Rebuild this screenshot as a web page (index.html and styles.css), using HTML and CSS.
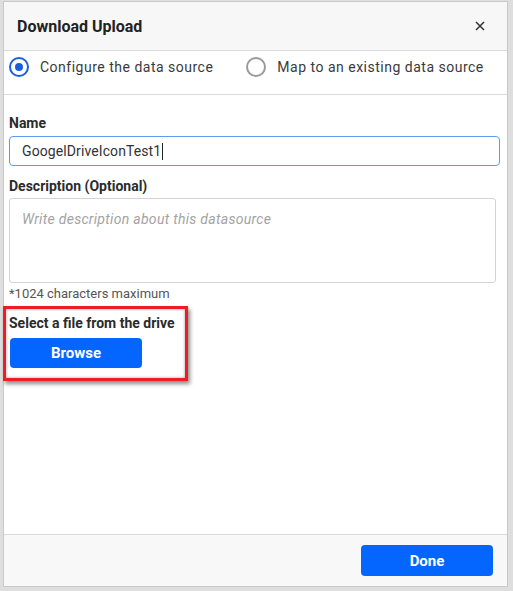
FILE: index.html
```html
<!DOCTYPE html>
<html>
<head>
<meta charset="utf-8">
<link rel="stylesheet" href="styles.css">
</head>
<body>
<div class="dialog">
  <div class="header">
    <span class="title">Download Upload</span>
    <svg class="close" width="10" height="10" viewBox="0 0 10 10"><path d="M1 1L9 9M9 1L1 9" stroke="#333" stroke-width="1.5" fill="none"/></svg>
  </div>
  <div class="radios">
    <label class="radio"><span class="circle checked"><span class="dot"></span></span><span class="rtext">Configure the data source</span></label>
    <label class="radio second"><span class="circle"></span><span class="rtext">Map to an existing data source</span></label>
  </div>
  <div class="content">
    <div class="label">Name</div>
    <div class="input"><span>GoogelDriveIconTest1</span><span class="caret"></span></div>
    <div class="label desc-label">Description (Optional)</div>
    <div class="textarea">Write description about this datasource</div>
    <div class="hint">*1024 characters maximum</div>
    <div class="highlight">
      <div class="label">Select a file from the drive</div>
      <button class="btn browse">Browse</button>
    </div>
  </div>
  <div class="footer">
    <button class="btn done">Done</button>
  </div>
</div>
</body>
</html>
```
FILE: styles.css
```css
html, body {
  margin: 0;
  padding: 0;
}
body {
  background: #dedede;
  font-family: Roboto, "Liberation Sans", Arial, sans-serif;
  color: #333;
  width: 513px;
  height: 591px;
  overflow: hidden;
}
.dialog {
  margin: 1px 0 0 3px;
  width: 503px;
  height: 584px;
  border: 1px solid #c9c9c9;
  background: #fff;
  display: flex;
  flex-direction: column;
}
.header {
  height: 48px;
  background: #f7f7f7;
  border-bottom: 1px solid #dadada;
  display: flex;
  align-items: center;
  justify-content: space-between;
  padding: 0 22px 0 13px;
}
.title {
  font-size: 16px;
  font-weight: 700;
  color: #222;
}
.radios {
  height: 44px;
  box-sizing: border-box;
  border-bottom: 1px solid #dadada;
  display: flex;
  align-items: flex-start;
  padding: 6px 0 0 5px;
}
.radio {
  display: flex;
  align-items: center;
}
.radio.second {
  margin-left: 33px;
}
.circle {
  width: 16px;
  height: 16px;
  border: 2px solid #9a9a9a;
  border-radius: 50%;
  display: flex;
  align-items: center;
  justify-content: center;
}
.circle.checked {
  border-color: #1a5ee0;
}
.dot {
  width: 8px;
  height: 8px;
  border-radius: 50%;
  background: #1a5ee0;
}
.rtext {
  margin-left: 11px;
  font-size: 14px;
  letter-spacing: 0.5px;
  color: #3a3a3a;
}
.content {
  flex: 1;
  padding: 20px 0 0 5px;
}
.label {
  font-size: 14px;
  font-weight: 700;
  line-height: 16px;
  color: #2b2b2b;
}
.input {
  margin-top: 5px;
  height: 28px;
  border: 1px solid #5a9cf2;
  border-radius: 4px;
  display: flex;
  align-items: center;
  padding-left: 12px;
  box-sizing: content-box;
  font-size: 14px;
  letter-spacing: 0.1px;
  color: #333;
  width: 477px;
}
.caret {
  display: inline-block;
  width: 1px;
  height: 17px;
  background: #222;
  margin-left: 1px;
}
.desc-label {
  margin-top: 12px;
}
.textarea {
  margin-top: 4px;
  width: 473px;
  height: 71px;
  border: 1px solid #d4d4d4;
  border-radius: 3px;
  padding: 12px 0 0 12px;
  font-size: 14px;
  letter-spacing: 0.3px;
  font-style: italic;
  color: #a3a3a3;
}
.hint {
  margin-top: 4px;
  font-size: 13px;
  line-height: 14px;
  color: #555;
}
.highlight {
  margin: 5px 0 0 -6px;
  width: 176px;
  border: 3px solid #ee1c24;
  box-shadow: 2px 3px 4px rgba(0,0,0,0.45), inset 0 0 3px rgba(0,0,0,0.4);
  padding: 6px 0 10px 3px;
}
.btn {
  border: none;
  background: #0566ff;
  color: #fff;
  font-family: Roboto, "Liberation Sans", Arial, sans-serif;
  font-weight: 700;
  font-size: 15px;
  border-radius: 4px;
  cursor: pointer;
}
.browse {
  margin-top: 7px;
  margin-left: 1px;
  width: 132px;
  height: 30px;
}
.footer {
  height: 51px;
  background: #f8f8f8;
  border-top: 1px solid #dadada;
  display: flex;
  align-items: center;
  justify-content: flex-end;
  padding-right: 14px;
}
.done {
  width: 132px;
  height: 31px;
}
```
